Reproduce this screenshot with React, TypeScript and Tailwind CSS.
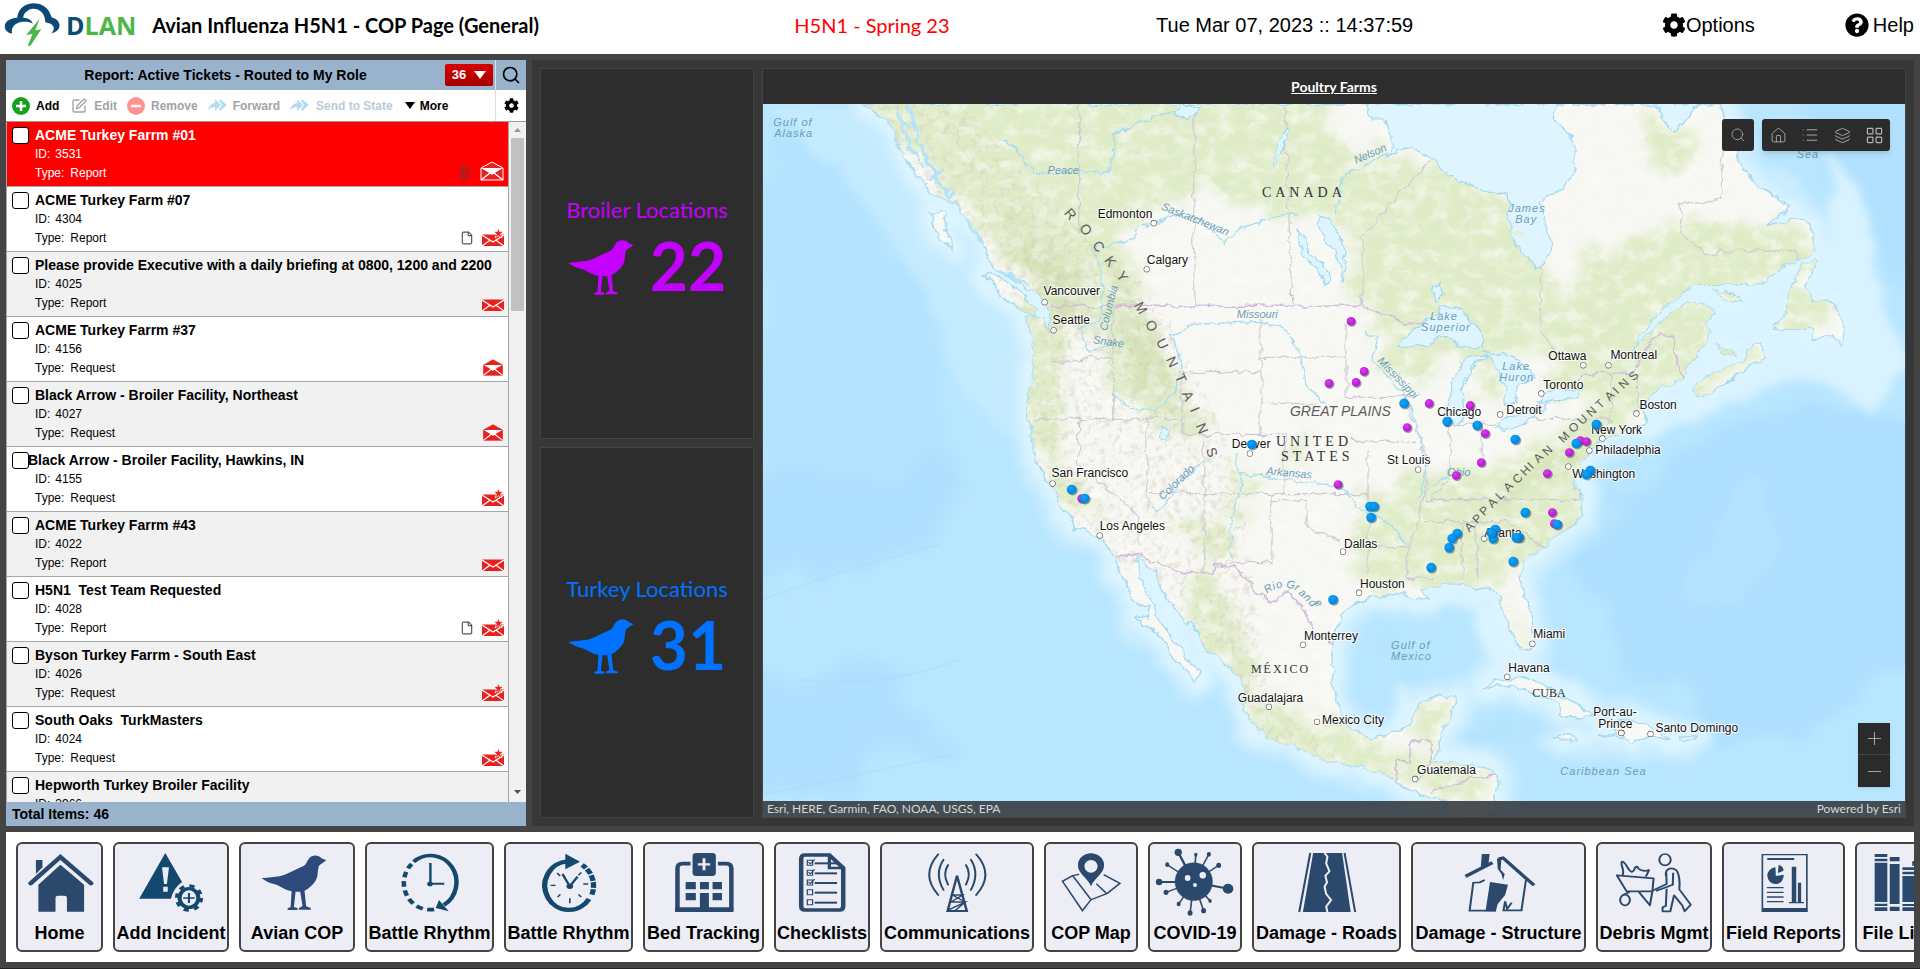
import React from 'react';
import { FaCog, FaQuestionCircle } from 'react-icons/fa';
import { File, Home, Layers, LayoutGrid, List, Minus, Paperclip, Plus, Search, SquarePen } from 'lucide-react';

type Mail = 'open' | 'closed' | 'new';

interface Ticket {
  title: string;
  id: string;
  type: string;
  mail: Mail;
  extra?: 'clip' | 'file';
}

const tickets: Ticket[] = [
  { title: 'ACME Turkey Farrm #01', id: '3531', type: 'Report', mail: 'open', extra: 'clip' },
  { title: 'ACME Turkey Farm #07', id: '4304', type: 'Report', mail: 'new', extra: 'file' },
  { title: 'Please provide Executive with a daily briefing at 0800, 1200 and 2200', id: '4025', type: 'Report', mail: 'closed' },
  { title: 'ACME Turkey Farrm #37', id: '4156', type: 'Request', mail: 'open' },
  { title: 'Black Arrow - Broiler Facility, Northeast', id: '4027', type: 'Request', mail: 'open' },
  { title: 'Black Arrow - Broiler Facility, Hawkins, IN', id: '4155', type: 'Request', mail: 'new' },
  { title: 'ACME Turkey Farrm #43', id: '4022', type: 'Report', mail: 'closed' },
  { title: 'H5N1  Test Team Requested', id: '4028', type: 'Report', mail: 'new', extra: 'file' },
  { title: 'Byson Turkey Farrm - South East', id: '4026', type: 'Request', mail: 'new' },
  { title: 'South Oaks  TurkMasters', id: '4024', type: 'Request', mail: 'new' },
  { title: 'Hepworth Turkey Broiler Facility', id: '3966', type: 'Request', mail: 'new' },
];

const BIRD =
  'M303 199 L288 193 C280 183 260 181 250 194 C243 204 242 212 232 217 L195 234 C180 242 165 247 150 248 L107 253 L126 264 C140 270 150 270 160 276 C175 284 183 289 195 291 L198 292 L195 339 L186 343 V348 H216 V342 L205 339 L210 293 H224 L231 336 L220 342 V347 H256 V342 L242 337 L237 290 C255 280 272 265 276 245 C278 230 279 214 283 213 Z';

const Bird = ({ className }: { className: string }) => (
  <svg viewBox="107 184 197 165" className={className} fill="currentColor" aria-hidden="true">
    <path d={BIRD} />
  </svg>
);

const Logo = () => (
  <svg viewBox="10 10 142 134" preserveAspectRatio="none" className="h-[45px] w-[57px]" aria-hidden="true">
    <path
      d="M30 104 C4 98 4 60 43 57 C46 4 108 0 124 42 C126 48 128 52 129 56 C153 62 157 96 128 103 C140 88 134 74 113 70 C113 34 84 22 69 36 C61 42 58 48 58 57 C70 58 79 64 82 74 C66 64 25 66 30 104 Z"
      fill="#0b4a75"
    />
    <path d="M99 60 L65 108 L81 105 L69 141 L76 140 L103 91 L88 94 Z" fill="#4cb748" />
  </svg>
);

const MailIcon = ({ kind, selected }: { kind: Mail; selected?: boolean }) => {
  if (kind === 'open') {
    return (
      <svg viewBox="0 0 24 20" className={selected ? 'h-5 w-6' : 'h-[17px] w-[22px]'} aria-hidden="true">
        <path d="M1 7 L12 1 L23 7 V19 H1 Z" fill="#e8211f" stroke={selected ? '#fff' : '#e8211f'} strokeWidth="1" />
        <path d="M1 7 H23 L13 13 H11 Z" fill="#fff" />
        <path d="M1 19 L10 12 L12 13 L14 12 L23 19" fill="none" stroke="#fff" strokeWidth="1.3" />
      </svg>
    );
  }
  return (
    <svg viewBox="0 0 22 17" className="h-[17px] w-[22px]" aria-hidden="true">
      <path d="M0 5.5 H22 V17 H0 Z" fill="#e8211f" />
      <path d="M0 6 L11 13 L22 6 M0 17 L8 11.3 M22 17 L14 11.3" fill="none" stroke="#fff" strokeWidth="1.2" />
      {kind === 'new' && (
        <path d="M16.5 -1 L17.7 2.5 H21.5 L18.5 5 L20 9 L16.5 6.7 L13 9 L14.5 5 L11.5 2.5 H15.3 Z" fill="#e8211f" stroke="#fff" strokeWidth=".7" />
      )}
    </svg>
  );
};

const ArrowIcon = () => (
  <svg viewBox="0 0 20 13" className="h-[13px] w-5" fill="#b5dcf0" aria-hidden="true">
    <path d="M0 11 Q1 5 7 4 V0 L13 6 L7 12 V8 Q3 8 0 11Z" />
    <path d="M12 0 L19 6 L12 12 L11 10 L14 6 L11 2Z" />
  </svg>
);

const TicketRow = ({ ticket, index }: { ticket: Ticket; index: number }) => {
  const selected = index === 0;
  const bg = selected ? 'bg-[#ff0000] text-white' : index % 2 ? 'bg-white' : 'bg-[#f1f1f1]';
  return (
    <li className={`flex h-[65px] shrink-0 border-b border-r border-[#a6a6a6] pl-[5px] ${bg}`}>
      <input
        id={`ticket-${ticket.id}`}
        type="checkbox"
        className="mt-[5px] h-[17px] w-[17px] shrink-0 appearance-none rounded-[3px] border border-black bg-white"
      />
      <div className={`flex min-w-0 flex-1 flex-col ${index === 5 ? '-ml-px' : 'pl-[6px]'}`}>
        <label htmlFor={`ticket-${ticket.id}`} className="mt-[3px] h-5 whitespace-pre text-[14px] leading-5 font-bold">
          {ticket.title}
        </label>
        <p className={`h-[18px] text-[12px] leading-[18px] ${index === 5 ? 'pl-[7px]' : ''}`}>
          <span className="mr-[5px]">ID:</span>
          {ticket.id}
        </p>
        <p className={`h-5 text-[12px] leading-5 ${index === 5 ? 'pl-[7px]' : ''}`}>
          <span className="mr-[6px]">Type:</span>
          {ticket.type}
        </p>
      </div>
      <div className="flex items-end gap-2 pb-[5px] pr-1">
        {ticket.extra === 'clip' && <Paperclip size={16} strokeWidth={1.8} className="-rotate-45 text-[#7a3030]" />}
        {ticket.extra === 'file' && <File size={14} strokeWidth={2} className="mb-px text-[#555]" />}
        <MailIcon kind={ticket.mail} selected={selected} />
      </div>
    </li>
  );
};

const TicketPanel = () => (
  <section className="flex w-[520px] shrink-0 flex-col bg-white">
    <div className="flex h-[30px] shrink-0 items-center bg-[#9ab3cc]">
      <h2 className="flex-1 text-center text-[14px] font-bold">Report: Active Tickets - Routed to My Role</h2>
      <button className="mr-[2px] flex h-[22px] w-12 items-center justify-center gap-2 rounded-[2px] bg-linear-to-b from-[#d80000] to-[#a30000] text-[13px] font-bold text-white">
        36
        <svg viewBox="0 0 12 8" className="h-2 w-3" fill="currentColor"><path d="M0 0H12L6 8Z" /></svg>
      </button>
      <button aria-label="Search tickets" className="flex h-full w-[31px] items-center justify-center border-l border-[#dbe4ed]">
        <Search size={20} strokeWidth={2} />
      </button>
    </div>
    <div className="flex h-8 shrink-0 items-center border-b border-[#999] text-[12px] font-bold">
      <div className="flex flex-1 items-center pl-[6px] text-[#a3a3a3]">
        <button className="flex items-center gap-[6px] text-black">
          <svg viewBox="0 0 18 18" className="h-[18px] w-[18px]"><circle cx="9" cy="9" r="9" fill="#13a31b" /><path d="M9 4V14M4 9H14" stroke="#fff" strokeWidth="2.5" /></svg>
          Add
        </button>
        <button className="ml-3 flex items-center gap-[7px]">
          <SquarePen size={16} strokeWidth={2} />
          Edit
        </button>
        <button className="ml-[10px] flex items-center gap-[6px]">
          <svg viewBox="0 0 18 18" className="h-[18px] w-[18px]"><circle cx="9" cy="9" r="9" fill="#ff9393" /><path d="M4 9H14" stroke="#fff" strokeWidth="2.5" /></svg>
          Remove
        </button>
        <button className="ml-[10px] flex items-center gap-[5px]">
          <ArrowIcon />
          Forward
        </button>
        <button className="ml-[10px] flex items-center gap-[6px] text-[#bccbd8]">
          <ArrowIcon />
          Send to State
        </button>
        <button className="ml-3 flex items-center gap-[5px] text-black">
          <svg viewBox="0 0 10 7" className="h-[7px] w-[10px]" fill="currentColor"><path d="M0 0H10L5 7Z" /></svg>
          More
        </button>
      </div>
      <button aria-label="Panel settings" className="flex h-full w-[31px] items-center justify-center border-l border-[#ddd]">
        <FaCog size={15} />
      </button>
    </div>
    <div className="flex min-h-0 flex-1 overflow-hidden">
      <ul className="flex min-w-0 flex-1 flex-col border-l border-[#a6a6a6]">
        {tickets.map((ticket, i) => (
          <TicketRow key={ticket.id} ticket={ticket} index={i} />
        ))}
      </ul>
      <div className="flex w-[17px] shrink-0 flex-col items-center justify-between bg-[#f1f1f1] pb-2" aria-hidden="true">
        <div className="flex w-full flex-col items-center">
          <svg viewBox="0 0 7 4" className="my-[6px] h-1 w-[7px]" fill="#999"><path d="M0 4H7L3.5 0Z" /></svg>
          <div className="h-[173px] w-[13px] bg-[#c1c1c1]" />
        </div>
        <svg viewBox="0 0 7 4" className="h-1 w-[7px]" fill="#505050"><path d="M0 0H7L3.5 4Z" /></svg>
      </div>
    </div>
    <div className="h-6 shrink-0 bg-[#9ab3cc] pl-[6px] text-[14px] leading-6 font-bold">Total Items: 46</div>
  </section>
);

const CountCard = ({ title, count, color }: { title: string; count: number; color: string }) => (
  <section className={`flex flex-1 flex-col items-center justify-center border border-[#444] bg-[#2d2d2d] pb-2 ${color}`}>
    <h3 className="text-[22px] leading-7">{title}</h3>
    <div className="mt-1 flex items-center gap-4">
      <Bird className="mt-1 h-[55px] w-[66px]" />
      <span className="text-[66px] leading-[76px] font-bold">{count}</span>
    </div>
  </section>
);

const MAINLAND =
  'M865 105 L888 120 897 140 908 163 923 180 932 197 956 203 967 220 982 243 993 267 1012 278 1026 288 1043 300 1052 313 1049 333 1045 320 1027 318 1032 340 1035 360 1032 383 1028 407 1032 433 1036 460 1045 477 1056 492 1062 507 1073 520 1075 529 1089 532 1100 538 1113 555 1124 580 1132 600 1147 607 1148 618 1137 620 1152 630 1167 643 1173 657 1189 672 1197 680 1200 672 1186 660 1174 640 1160 620 1150 600 1143 583 1136 563 1139 557 1152 570 1160 583 1167 600 1185 620 1202 635 1204 647 1219 657 1234 673 1245 687 1243 710 1256 727 1271 738 1297 748 1340 764 1362 767 1384 773 1403 787 1421 795 1444 800 1450 817 1494 817 1494 800 1498 777 1492 772 1470 765 1444 763 1431 763 1440 747 1440 733 1449 720 1457 698 1436 697 1418 705 1412 723 1396 733 1370 737 1347 727 1340 713 1333 687 1332 657 1333 640 1340 615 1358 603 1381 595 1405 595 1414 600 1429 598 1421 590 1432 587 1444 585 1462 583 1475 590 1488 588 1501 600 1506 620 1514 640 1525 652 1532 648 1533 627 1527 603 1519 577 1525 560 1543 548 1560 533 1582 517 1580 497 1573 480 1584 460 1599 441 1634 428 1647 423 1640 407 1651 393 1680 380 1690 360 1706 347 1710 333 1703 323 1714 317 1710 307 1688 303 1666 317 1647 337 1628 354 1636 343 1658 313 1680 297 1691 285 1747 285 1765 282 1776 270 1795 262 1814 253 1810 225 1800 218 1765 228 1789 207 1758 187 1741 170 1736 150 1725 127 1721 105 Z';
const ISLANDS = [
  'M985 275 L1000 277 1019 290 1037 310 1034 317 1015 307 997 290 Z',
  'M930 213 L945 213 945 230 954 250 941 240 Z',
  'M1693 387 L1725 367 1743 363 1751 347 1758 343 1764 357 1740 373 1710 393 1697 397 Z',
  'M1802 263 L1814 263 1806 287 1810 300 1832 303 1836 317 1843 327 1841 345 1832 337 1810 340 1814 330 1773 330 1784 313 1791 287 Z',
  'M1712 291 L1730 294 1742 303 1728 302 Z',
  'M1716 345 L1724 352 1732 352 1734 356 1722 355 Z',
  'M1482 690 L1495 681 1525 677 1551 690 1577 705 1595 717 1562 717 1558 703 1529 692 1505 684 Z',
  'M1599 735 L1617 735 1614 722 1636 721 1662 733 1668 738 1640 737 1632 743 1624 738 Z',
  'M1555 736 L1568 735 1577 740 1564 741 Z',
  'M1680 736 L1697 736 1696 740 1682 740 Z',
].join(' ');
const INLAND_WATER = [
  'M1366 105 L1370 120 1386 120 1394 153 1410 150 1429 158 1451 177 1477 190 1508 195 1510 233 1521 253 1536 267 1547 263 1551 243 1543 217 1540 202 1562 190 1575 170 1573 140 1553 120 1556 105 Z',
  'M1654 105 L1662 120 1675 133 1691 113 1700 105 Z',
  'M1397 347 L1414 330 1440 313 1442 307 1462 310 1469 323 1481 330 1484 347 1462 347 1440 337 1429 347 Z',
  'M1432 287 L1440 284 1443 296 1436 302 Z',
  'M1466 357 L1451 383 1445 413 1455 427 1464 417 1462 393 1471 367 1488 357 Z',
  'M1484 353 L1514 357 1536 377 1529 383 1518 383 1514 403 1506 403 1505 387 1499 377 1495 363 Z',
  'M1495 428 L1503 422 1525 413 1543 405 1545 410 1525 423 1506 430 Z',
  'M1538 402 L1547 393 1577 390 1577 397 1558 401 Z',
  'M1317 217 L1330 220 1340 238 1347 262 1343 282 1337 255 1325 242 Z',
  'M1296 230 L1306 240 1308 255 1326 268 1330 280 1325 286 1319 272 1302 256 Z',
  'M1282 134 L1288 130 1285 150 1272 168 1277 148 Z',
  'M1180 104 L1200 108 1190 120 1176 117 Z',
  'M1160 427 L1170 432 1168 440 1160 436 Z',
].join(' ');
const BORDERS =
  'M1079 105V232 M1194 105V307 M1285 105L1292 307 M1432 158L1362 237V300 M1540 267V333L1553 352 M1113 307V420 M1034 420H1182 M1182 373V435 M1182 373H1261 M1261 320V435 M1182 435H1285 M1261 358H1346 M1261 405H1320 M1079 420V465L1140 517V545 M1147 420V507 M1147 494H1368 M1204 435V572 M1284 435V494 M1272 494V563H1231 M1272 501H1307V528L1340 540 M1346 398H1410 M1350 442H1415 M1346 320V398 M1368 450V575 M1368 549H1408 M1425 500H1580 M1425 522H1505L1545 548 M1462 522V580 M1475 522L1478 580 M1407 405L1420 440 1427 475 1418 520 1408 550 1406 578H1432 M1449 424H1529 M1482 424V466 M1449 424V480L1430 500 M1528 420H1610L1600 440 M1611 374V425 M1637 376V410 M1050 362L1070 363 1090 358 1112 357 M1725 105L1720 200 1680 205 1682 235 1712 258 1720 252H1796L1798 262';
const NATION_BORDERS =
  'M1052 307H1362V300L1368 310 1388 317 1405 324 1427 323 M1540 410L1546 402 1592 373H1632L1645 350 1658 335 1672 337 1676 360 1682 378 M1113 556L1140 555 1182 573H1214V566H1234L1253 590 1272 603 1290 592 1305 612 1315 633 1335 645 M1397 762H1410V742H1431V763 M1397 762V785 M1431 763L1416 782 M1430 792L1470 778 1496 776';
const RIVERS =
  'M1003 142L1015 148 1035 175 1058 175 1079 170 1102 177 1112 165 1114 135 1150 120 1180 112 M1184 112L1210 105 M1095 250L1135 240 1137 228 1154 224 1180 216 1200 220 1225 245 1240 230 1272 218 1300 215 M1095 250L1104 285 1100 322 1080 330 1090 352 1110 345 M1113 397L1130 408 1155 411 1175 395 1182 365 1172 338 1195 325 1260 322 1285 330 1300 350 1305 385 1325 405 M1365 333L1378 338 1372 360 1395 385 1410 405 1418 430 1428 465 1418 500 M1240 474L1310 484 1340 485 1360 510 1390 525 1408 545 M1204 460L1180 485 1158 512 1150 505 M1236 455L1242 485 1230 530 1232 560 M1450 475L1425 490 M1394 153L1345 175 1335 215';

const cities: [string, number, number, number, number][] = [
  ['Edmonton', 1098, 219, 1154, 224],
  ['Calgary', 1147, 265, 1147, 270],
  ['Vancouver', 1044, 296, 1045, 303],
  ['Seattle', 1053, 325, 1054, 331],
  ['San Francisco', 1052, 477, 1053, 484],
  ['Los Angeles', 1100, 530, 1100, 536],
  ['Ottawa', 1548, 361, 1583, 366],
  ['Montreal', 1610, 360, 1608, 366],
  ['Toronto', 1543, 390, 1541, 394],
  ['Boston', 1639, 410, 1636, 414],
  ['Detroit', 1506, 415, 1500, 415],
  ['Chicago', 1437, 417, 1447, 424],
  ['New York', 1591, 435, 1602, 439],
  ['Philadelphia', 1595, 455, 1589, 451],
  ['Washington', 1572, 478, 1568, 467],
  ['St Louis', 1387, 465, 1418, 470],
  ['Denver', 1232, 449, 1250, 454],
  ['Dallas', 1344, 548, 1343, 552],
  ['Houston', 1360, 588, 1359, 593],
  ['Atlanta', 1484, 537, 1484, 539],
  ['Miami', 1533, 638, 1532, 644],
  ['Havana', 1508, 672, 1507, 677],
  ['Monterrey', 1304, 640, 1303, 645],
  ['Guadalajara', 1238, 702, 1269, 707],
  ['Mexico City', 1322, 724, 1317, 722],
  ['Guatemala', 1417, 774, 1415, 779],
  ['Port-au-', 1593, 716, 1621, 733],
  ['Prince', 1598, 728, 1621, 733],
  ['Santo Domingo', 1655, 732, 1650, 734],
];

const broilers = [
  [1351, 322], [1364, 372], [1356, 383], [1329, 384], [1429, 404], [1470, 406], [1407, 428], [1485, 434], [1580, 441], [1586, 442],
  [1569, 453], [1481, 463], [1456, 476], [1547, 474], [1552, 513], [1554, 524], [1338, 485], [1082, 499],
];
const turkeys = [
  [1252, 445], [1404, 404], [1447, 422], [1477, 426], [1515, 440], [1596, 425], [1576, 444], [1072, 490], [1085, 499], [1333, 600],
  [1370, 507], [1374, 507], [1371, 518], [1525, 513], [1557, 525], [1457, 534], [1452, 539], [1449, 548], [1495, 530], [1493, 539],
  [1491, 533], [1519, 538], [1516, 538], [1513, 562], [1431, 568], [1590, 471], [1586, 475],
];

const PoultryMap = () => (
  <svg viewBox="763 105 1142 712" preserveAspectRatio="xMidYMid slice" className="absolute inset-0 h-full w-full" role="img" aria-label="Poultry Farms">
    <defs>
      <filter id="coast" x="-5%" y="-5%" width="110%" height="110%">
        <feTurbulence type="fractalNoise" baseFrequency="0.09" numOctaves="3" seed="4" result="n" />
        <feDisplacementMap in="SourceGraphic" in2="n" scale="9" xChannelSelector="R" yChannelSelector="G" />
      </filter>
      <filter id="deep" x="-10%" y="-10%" width="120%" height="120%">
        <feTurbulence type="fractalNoise" baseFrequency="0.012" numOctaves="4" seed="5" result="n" />
        <feDisplacementMap in="SourceGraphic" in2="n" scale="90" xChannelSelector="R" yChannelSelector="G" />
        <feGaussianBlur stdDeviation="7" />
      </filter>
      <filter id="shelf" x="-10%" y="-10%" width="120%" height="120%">
        <feTurbulence type="fractalNoise" baseFrequency="0.03" numOctaves="3" seed="2" result="n" />
        <feDisplacementMap in="SourceGraphic" in2="n" scale="24" xChannelSelector="R" yChannelSelector="G" />
        <feGaussianBlur stdDeviation="4" />
      </filter>
      <filter id="green" x="-10%" y="-10%" width="120%" height="120%">
        <feTurbulence type="fractalNoise" baseFrequency="0.04" numOctaves="4" seed="8" result="n" />
        <feDisplacementMap in="SourceGraphic" in2="n" scale="50" xChannelSelector="R" yChannelSelector="G" />
        <feGaussianBlur stdDeviation="5" />
      </filter>
      <filter id="speckle" x="0" y="0" width="100%" height="100%">
        <feTurbulence type="fractalNoise" baseFrequency="0.06 0.08" numOctaves="5" seed="3" />
        <feColorMatrix values="0 0 0 0 .97  0 0 0 0 .97  0 0 0 0 .95  0 2.6 0 0 -1.1" />
      </filter>
      <filter id="relief" x="0" y="0" width="100%" height="100%">
        <feTurbulence type="fractalNoise" baseFrequency="0.16" numOctaves="4" seed="11" />
        <feColorMatrix values="0 0 0 0 .62  0 0 0 0 .56  0 0 0 0 .46  0 0 3.5 0 -1.75" />
      </filter>
      <clipPath id="land"><path d={MAINLAND + ISLANDS} /></clipPath>
      <clipPath id="mountains">
        <path d="M870 105H960L1060 210 1160 300 1240 470 1250 560 1270 700 1340 760 1400 790 1300 760 1240 720 1180 610 1090 540 1030 460 1030 330 960 230Z" />
      </clipPath>
      <radialGradient id="broiler" cx=".4" cy=".35"><stop offset="0" stopColor="#dc3df0" /><stop offset="1" stopColor="#b81fd2" /></radialGradient>
      <radialGradient id="turkey" cx=".4" cy=".35"><stop offset="0" stopColor="#14a3f7" /><stop offset="1" stopColor="#008be6" /></radialGradient>
    </defs>

    <rect x="763" y="105" width="1142" height="712" fill="#b9e6ff" />
    <g filter="url(#deep)">
      <path d="M763 130L800 120 850 180 920 270 960 380 940 430 960 520 900 560 763 590Z" fill="#b4e3ff" />
      <path d="M740 660L900 680 960 740 740 800Z M740 480L930 470 960 540 740 600Z" fill="#b0e0ff" />
      <path d="M1595 520L1700 450 1800 390 1930 440V650L1860 700 1720 740 1690 700 1600 640 1570 560Z" fill="#aedfff" />
      <path d="M1690 530L1760 480 1790 540 1740 600 1700 590Z" fill="#b6e4ff" />
      <path d="M1800 80H1930V290L1870 250 1830 190Z" fill="#b1e1ff" />
    </g>
    <g filter="url(#shelf)">
      <path d="M763 105H890L930 190 1000 270 1030 340 1010 440 970 400 920 280 840 170Z" fill="#c4eaff" />
      <path d={MAINLAND + ISLANDS} fill="none" stroke="#cbedff" strokeWidth="40" strokeLinejoin="round" />
      <path d="M1640 440L1660 330 1760 290 1830 240 1830 150 1870 220 1880 300 1905 370 1870 420 1820 380 1740 400Z" fill="#d8f2ff" />
      <path d="M1370 605L1440 590 1500 610 1530 660 1600 700 1500 670 1470 610Z M1450 690L1400 740 1395 690Z" fill="#daf3ff" />
      <path d={MAINLAND + ISLANDS} fill="none" stroke="#dcf4ff" strokeWidth="20" strokeLinejoin="round" />
    </g>
    <path d="M763 600Q840 570 940 545 M763 795Q860 775 950 755 M800 680Q880 690 960 660" fill="none" stroke="#a5d9f8" strokeWidth="2" opacity=".4" />
    <path d="M1380 640Q1420 660 1410 700 M1460 740Q1540 720 1590 725" fill="none" stroke="#acdcf8" strokeWidth="10" opacity=".35" filter="url(#shelf)" />

    <g filter="url(#coast)">
      <path d={MAINLAND + ISLANDS} fill="#f7f7f3" stroke="#a2d9ef" strokeWidth="1.5" />
      <g clipPath="url(#land)">
        <g filter="url(#green)" fill="#dfecc7">
          <path d="M860 90H1310L1370 180 1290 225 1200 190 1140 215 1120 250 1150 310 1190 400 1215 450 1160 430 1110 380 1090 300 1060 350 1060 460 1100 510 1070 520 1020 400 1030 290Z" />
          <path d="M1310 200L1385 150 1440 165 1520 200 1560 300 1590 250 1700 220 1790 230 1830 270 1700 300 1720 330 1640 410 1550 390 1540 350 1480 360 1400 350 1350 300 1350 230Z" />
          <path d="M1400 470L1470 470 1560 430 1620 390 1640 420 1580 470 1590 530 1500 580 1420 590 1390 540Z" />
          <path d="M1380 340L1430 350 1430 380 1380 380Z M1470 370L1500 370 1500 410 1470 400Z" />
          <path d="M1200 560L1225 590 1240 650 1280 710 1400 750 1490 770 1490 810 1380 780 1260 745 1225 670 1190 610Z" />
          <path d="M1410 700L1450 700 1440 750 1410 740Z M1290 450L1300 440 1310 480Z" />
          <path d="M1180 510L1240 540 1220 560 1160 530Z M1230 470L1250 470 1245 520 1230 510Z M1360 490L1430 510 1410 590 1350 570Z M1640 110L1700 150 1680 180 1650 160Z" />
          <path d="M1600 370L1700 320 1760 350 1690 400 1640 400Z M1780 290L1830 300 1820 335 1780 330Z M1500 590L1530 650 1515 640Z" />
        </g>
        <g filter="url(#green)" fill="#cedbac" opacity=".55">
          <path d="M1010 210L1080 270 1090 330 1060 330Z M1110 250L1150 320 1180 410 1130 380Z M1220 580L1250 660 1235 640Z M1480 520L1570 440 1590 420 1570 470Z" />
        </g>
        <rect x="763" y="105" width="1142" height="712" filter="url(#speckle)" opacity=".6" />
        <g clipPath="url(#mountains)"><rect x="763" y="105" width="640" height="712" filter="url(#relief)" opacity=".4" /></g>
        <path d={BORDERS} fill="none" stroke="#cfcbd4" strokeWidth="1.2" />
        <path d={NATION_BORDERS} fill="none" stroke="#d2bedb" strokeWidth="1.6" />
        <path d={RIVERS} fill="none" stroke="#a6dcf2" strokeWidth="1.3" />
      </g>
      <path d={INLAND_WATER} fill="#def5ff" stroke="#a2d9ef" strokeWidth="1.2" />
      <path d="M1511 232L1522 233 1526 238 1516 238Z" fill="#e6efd6" />
      <path d="M897 110L912 150 925 170 M908 105L920 145 940 185 M925 155L950 200 955 190 M967 220L985 245 M1000 270L1030 285 M905 125L912 130 M930 180L945 170" fill="none" stroke="#b6e4f6" strokeWidth="3" />
    </g>

    <g fontSize="11" fontStyle="italic" fill="#6b9db8" style={{ fontFamily: '"Liberation Sans", sans-serif' }}>
      <text x="774" y="127" letterSpacing="1">Gulf of</text>
      <text x="775" y="138" letterSpacing="1">Alaska</text>
      <text x="1048" y="175">Peace</text>
      <text x="1161" y="210" transform="rotate(22 1161 210)">Saskatchewan</text>
      <text x="1356" y="165" transform="rotate(-24 1356 165)">Nelson</text>
      <text x="1508" y="213" letterSpacing="1">James</text>
      <text x="1515" y="224" letterSpacing="1">Bay</text>
      <text x="1796" y="159" letterSpacing="1">Sea</text>
      <text x="1237" y="319">Missouri</text>
      <text x="1107" y="332" transform="rotate(-76 1107 332)">Columbia</text>
      <text x="1093" y="344" transform="rotate(8 1093 344)">Snake</text>
      <text x="1430" y="321" letterSpacing="1">Lake</text>
      <text x="1421" y="332" letterSpacing="1">Superior</text>
      <text x="1502" y="371" letterSpacing="1">Lake</text>
      <text x="1499" y="382" letterSpacing="1">Huron</text>
      <text x="1377" y="362" transform="rotate(46 1377 362)">Mississippi</text>
      <text x="1266" y="475" transform="rotate(5 1266 475)">Arkansas</text>
      <text x="1163" y="501" transform="rotate(-44 1163 501)">Colorado</text>
      <text x="1447" y="476">Ohio</text>
      <text x="1267 1274 1277 1283 1286 1294 1298 1303 1308" y="594 590 589 588 588 590 594 598 603" rotate="-35 -25 -15 0 8 25 38 45 52">Rio Grande</text>
      <text x="1391" y="649" letterSpacing="1">Gulf of</text>
      <text x="1391" y="660" letterSpacing="1">Mexico</text>
      <text x="1560" y="775" letterSpacing="1">Caribbean Sea</text>
    </g>
    <g fontSize="14" fill="#5c5c5c" style={{ fontFamily: '"Liberation Sans", sans-serif' }}>
      <text x="1290" y="417" fontStyle="italic">GREAT PLAINS</text>
      <text
        x="1064 1079 1092 1104 1116 1125 1134 1145 1156 1166 1175 1182 1190 1196 1206"
        y="214 229 246 261 276 290 306 324 342 360 377 394 410 426 450"
        rotate="50 52 54 55 56 58 60 62 64 65 66 66 68 68 70"
      >
        ROCKY MOUNTAINS
      </text>
      <text
        fontSize="12"
        x="1469 1477 1484 1492 1500 1508 1517 1525 1532 1538 1547 1556 1563 1573 1582 1591 1600 1609 1617 1623 1633"
        y="533 525 517 509 501 493 485 477 470 464 457 450 444 434 426 418 410 402 395 390 382"
        rotate="-45"
      >
        APPALACHIAN MOUNTAINS
      </text>
    </g>
    <g fontSize="14" fill="#333" style={{ fontFamily: '"Liberation Serif", serif' }}>
      <text x="1262" y="198" letterSpacing="4">CANADA</text>
      <text x="1276" y="447" letterSpacing="4">UNITED</text>
      <text x="1281" y="462" letterSpacing="4">STATES</text>
      <text x="1251" y="673" fontSize="12" letterSpacing="2">MÉXICO</text>
      <text x="1532" y="697" fontSize="12">CUBA</text>
    </g>
    <g fontSize="12" fill="#111" stroke="#fff" strokeWidth="2" strokeOpacity=".8" paintOrder="stroke" style={{ fontFamily: '"Liberation Sans", sans-serif' }}>
      {cities.map(([name, x, y, cx, cy]) => (
        <g key={name}>
          <circle cx={cx} cy={cy} r="2.5" fill="#fff" stroke="#555" strokeWidth="1.2" strokeOpacity="1" />
          <text x={x} y={y}>{name}</text>
        </g>
      ))}
    </g>
    {broilers.map(([x, y]) => (
      <g key={`${x}-${y}`}>
        <circle cx={x + 1} cy={y + 1} r="4.5" fill="#444" opacity=".5" />
        <circle cx={x} cy={y} r="4.3" fill="url(#broiler)" />
      </g>
    ))}
    {turkeys.map(([x, y]) => (
      <g key={`${x}-${y}`}>
        <circle cx={x + 1} cy={y + 1} r="5" fill="#444" opacity=".5" />
        <circle cx={x} cy={y} r="4.8" fill="url(#turkey)" />
      </g>
    ))}
  </svg>
);

const MapPanel = () => (
  <section className="flex min-w-0 flex-1 flex-col border border-[#444] bg-[#2d2d2d]">
    <h2 className="flex h-[35px] shrink-0 items-center justify-center text-[14px] font-bold text-white underline">Poultry Farms</h2>
    <div className="relative flex min-h-0 flex-1 flex-col justify-end overflow-hidden">
      <PoultryMap />
      <div className="absolute top-[15px] right-[15px] flex gap-2 text-[#b5b5b5]">
        <button aria-label="Search map" className="flex h-8 w-8 items-center justify-center rounded-[3px] bg-[#2b2b2b]"><Search size={16} strokeWidth={1.2} /></button>
        <div className="flex rounded-[3px] bg-[#2b2b2b] shadow-md">
          <button aria-label="Default view" className="flex h-8 w-8 items-center justify-center"><Home size={17} strokeWidth={1.2} /></button>
          <button aria-label="Legend" className="flex h-8 w-8 items-center justify-center"><List size={18} strokeWidth={1.2} /></button>
          <button aria-label="Layers" className="flex h-8 w-8 items-center justify-center"><Layers size={17} strokeWidth={1.2} /></button>
          <button aria-label="Basemaps" className="flex h-8 w-8 items-center justify-center"><LayoutGrid size={19} strokeWidth={1.5} /></button>
        </div>
      </div>
      <div className="absolute right-[15px] bottom-[30px] flex flex-col bg-[#2b2b2b] text-[#b5b5b5] shadow">
        <button aria-label="Zoom in" className="flex h-8 w-8 items-center justify-center border-b border-[#444]"><Plus size={21} strokeWidth={1} /></button>
        <button aria-label="Zoom out" className="flex h-8 w-8 items-center justify-center"><Minus size={21} strokeWidth={1} /></button>
      </div>
      <div className="relative flex h-4 shrink-0 items-center justify-between bg-[#363c40]/90 px-1 text-[12px] text-[#d8d8d8]">
        <span>Esri, HERE, Garmin, FAO, NOAA, USGS, EPA</span>
        <span>Powered by Esri</span>
      </div>
    </div>
  </section>
);

const NAVY = '#2b486d';
const TEAL = '#13496f';
const PALE = '#edeef5';

const spikes = [
  [1319, 85, 10], [1362, 92, 5], [1394, 91, 6], [1292, 122, 6], [1418, 124, 7], [1272, 174, 9], [1441, 194, 14],
  [1289, 205, 7], [1320, 240, 6], [1348, 267, 7], [1381, 260, 7], [1397, 231, 5],
];

interface Tile {
  label: string;
  width: string;
  cx: number;
  art: React.ReactNode;
}

const tiles: Tile[] = [
  {
    label: 'Home', width: 'w-[87px]', cx: 145,
    art: (
      <g fill={NAVY}>
        <path d="M86 108H102V130L86 150Z" />
        <path d="M73 178L146 99L221 178" fill="none" stroke={NAVY} strokeWidth="12" strokeLinecap="round" />
        <path d="M92 182L146 122L204 182V263H162V222Q162 215 155 215H141Q134 215 134 222V263H92Z" />
      </g>
    ),
  },
  {
    label: 'Add Incident', width: 'w-[116px]', cx: 419,
    art: (
      <g fill={TEAL}>
        <path d="M405 87L341 224H419Q425 192 446 174Z" />
        <path d="M397 130H414L409 180H402ZM400 188H411V203H400Z" fill={PALE} />
        <ellipse cx="463" cy="222" rx="23" ry="28" fill="none" stroke={TEAL} strokeWidth="10" />
        <ellipse cx="463" cy="222" rx="30" ry="37" fill="none" stroke={TEAL} strokeWidth="9" strokeDasharray="13 13.4" />
        <path d="M463 207V237M449 222H477" stroke={TEAL} strokeWidth="5" />
      </g>
    ),
  },
  { label: 'Avian COP', width: 'w-[116px]', cx: 727, art: <path d={BIRD} fill="#2d4a7c" transform="translate(553.2 -90) scale(.811 1)" /> },
  {
    label: 'Battle Rhythm', width: 'w-[129px]', cx: 1052,
    art: (
      <g fill="none" stroke={TEAL} strokeWidth="11">
        <path d="M1012 113A64 80 0 1 1 1086 243" />
        <path d="M1062 256A64 80 0 0 1 1007 120" strokeDasharray="17 11" />
        <path d="M1066 252L1074 228L1098 262Z" fill={TEAL} stroke="none" />
        <path d="M1053 117V179H1087" strokeWidth="6" />
        <circle cx="1052" cy="180" r="7" fill={TEAL} stroke="none" />
      </g>
    ),
  },
  {
    label: 'Battle Rhythm', width: 'w-[129px]', cx: 1394,
    art: (
      <g fill="none" stroke={TEAL} strokeWidth="13">
        <path d="M1390 112A59 73 0 1 0 1443 225" />
        <path d="M1450 212A59 73 0 0 0 1426 123" strokeDasharray="17 4" />
        <path d="M1385 89L1421 113L1385 136Z" fill={TEAL} stroke="none" />
        <path d="M1378 150L1396 187L1415 158" strokeWidth="6" />
        <circle cx="1396" cy="187" r="8" fill={TEAL} stroke="none" />
        <path d="M1349 184H1361M1429 180H1441M1396 223V238M1365 147L1372 156M1424 145L1417 154M1366 219L1373 211M1424 219L1417 211" strokeWidth="4" />
      </g>
    ),
  },
  {
    label: 'Bed Tracking', width: 'w-[121px]', cx: 155,
    art: (
      <g fill={NAVY}>
        <path d="M90 260V133Q90 119 102 119H122M189 119H210Q222 119 222 133V260" fill="none" stroke={NAVY} strokeWidth="11" />
        <path d="M84 250H227V264H84Z" />
        <rect x="127" y="87" width="57" height="69" rx="9" />
        <path d="M155 103V139M140 121H170" stroke={PALE} strokeWidth="7" />
        <path d="M110 174H135V196H110ZM145 174H167V196H145ZM176 174H199V196H176ZM110 207H135V229H110ZM176 207H199V229H176ZM145 207H167V255H145Z" />
      </g>
    ),
  },
  {
    label: 'Checklists', width: 'w-[96px]', cx: 446,
    art: (
      <g fill="none" stroke={NAVY} strokeWidth="11">
        <path d="M404 93H464L498 132V246Q498 258 489 258H404Q395 258 395 246V105Q395 93 404 93Z" />
        <path d="M464 93V132H498" strokeWidth="8" />
        {[118, 148, 177, 206, 236].map((y, i) => (
          <g key={y}>
            <path d={`M428 ${y}H483`} strokeWidth="6" />
            <path d={`M410 ${y - 9}H423V${y + 6}H410Z`} strokeWidth="3" />
            {i < 3 && <path d={`M413 ${y - 4}L417 ${y + 2}L428 ${y - 12}`} strokeWidth="3" />}
          </g>
        ))}
      </g>
    ),
  },
  {
    label: 'Communications', width: 'w-[154px]', cx: 778,
    art: (
      <g fill="none" stroke={NAVY} strokeWidth="5" strokeLinecap="round">
        <path d="M778 155L755 261H802Z" strokeWidth="6" />
        <path d="M767 213H792L763 234H798L760 256M767 213L798 234L775 258" strokeWidth="4" />
        <path d="M756 123Q742 150 756 182M745 107Q722 150 745 198M732 91Q688 152 732 213M800 123Q814 150 800 182M812 107Q834 150 812 198M825 91Q870 152 825 213" />
      </g>
    ),
  },
  {
    label: 'COP Map', width: 'w-[94px]', cx: 1105,
    art: (
      <g fill="none" stroke={NAVY} strokeWidth="4">
        <path d="M1076 151L1060 155L1035 172L1084 260L1105 227L1145 208L1176 178L1136 152M1060 155L1105 227M1118 179L1142 207" />
        <path d="M1105 187C1096 160 1073 150 1073 124A32 36 0 0 1 1137 124C1137 150 1114 160 1105 187Z" fill={NAVY} stroke="none" />
        <ellipse cx="1105" cy="127" rx="16" ry="19" fill={PALE} stroke="none" />
      </g>
    ),
  },
  {
    label: 'COVID-19', width: 'w-[94px]', cx: 1360,
    art: (
      <g fill={NAVY} stroke={NAVY}>
        {spikes.map(([x, y, r]) => (
          <g key={x}>
            <path d={`M1357 174L${x} ${y}`} strokeWidth={r > 8 ? 6 : 4} />
            <ellipse cx={x} cy={y} rx={r - 1} ry={r + 1} stroke="none" />
          </g>
        ))}
        <ellipse cx="1357" cy="173" rx="46" ry="57" />
        <g fill={PALE} stroke="none"><ellipse cx="1342" cy="162" rx="7" ry="9" /><ellipse cx="1379" cy="154" rx="8" ry="10" /><ellipse cx="1360" cy="183" rx="5" ry="6" /></g>
      </g>
    ),
  },
  {
    label: 'Damage - Roads', width: 'w-[149px]', cx: 114,
    art: (
      <g fill={NAVY}>
        <path d="M80 87H151L172 264H55Z" />
        <path d="M73 87L46 264M157 87L183 264" stroke={NAVY} strokeWidth="5" />
        <path d="M108 87L115 98 112 118 120 142 110 155 114 175 108 188 112 210 124 228 112 248 115 264" fill="none" stroke={PALE} strokeWidth="5" />
      </g>
    ),
  },
  {
    label: 'Damage - Structure', width: 'w-[175px]', cx: 535,
    art: (
      <g fill={NAVY}>
        <path d="M453 157L519 116" stroke={NAVY} strokeWidth="10" />
        <path d="M493 90H512L509 122L490 134Z" />
        <path d="M534 105L545 102L621 184" fill="none" stroke={NAVY} strokeWidth="9" />
        <path d="M530 104L541 101L539 137L549 150L545 168L541 150L532 135Z" />
        <path d="M500 168L488 175L472 176L463 260H528" fill="none" stroke={NAVY} strokeWidth="5" />
        <path d="M513 174L557 182L550 213L532 240L527 262H502Z" />
        <path d="M601 168L590 259H546L550 232L555 255L566 236" fill="none" stroke={NAVY} strokeWidth="5" />
      </g>
    ),
  },
  {
    label: 'Debris Mgmt', width: 'w-[116px]', cx: 915,
    art: (
      <g fill="none" stroke={NAVY} strokeWidth="5" strokeLinejoin="round">
        <ellipse cx="942" cy="107" rx="14" ry="17" />
        <path d="M824 154L914 163L911 202H848Z" />
        <path d="M838 153C844 138 832 124 836 113C848 113 848 138 861 144C872 140 862 130 874 128C876 138 890 144 903 138L895 158" />
        <ellipse cx="844" cy="228" rx="12" ry="16" />
        <path d="M855 204L838 214M878 204L905 244L911 202M911 200L946 180L945 146M962 146L961 182L920 201" />
        <path d="M944 155C942 136 956 126 970 139C977 150 979 178 977 196L1005 242L990 262L984 244L964 214L955 262H936V250L944 246L946 194" />
      </g>
    ),
  },
  {
    label: 'Field Reports', width: 'w-[123px]', cx: 1231,
    art: (
      <g fill={NAVY}>
        <path d="M1178 92H1287V262H1178Z" fill="none" stroke={NAVY} strokeWidth="4" />
        <path d="M1177 252H1288V264H1177ZM1190 102H1256V108H1190ZM1250 128H1261V236H1250ZM1265 176H1273V236H1265ZM1243 234H1280V238H1243Z" />
        <path d="M1210 130A20 25 0 1 0 1230 152L1211 156Z" />
        <path d="M1218 122A18 20 0 0 1 1230 140L1216 147Z" />
        <path d="M1189 191H1230M1189 205H1230M1189 219H1230M1189 233H1230" stroke={NAVY} strokeWidth="4" />
      </g>
    ),
  },
  {
    label: 'File Library', width: 'w-[112px]', cx: 1545,
    art: (
      <g fill={NAVY}>
        <path d="M1456 90H1487V99H1456ZM1456 104H1487V112H1456ZM1456 116H1487V234H1456ZM1456 239H1487V246H1456ZM1456 250H1487V261H1456Z" />
        <path d="M1493 99H1517V112H1493ZM1493 120H1517V240H1493ZM1493 248H1517V261H1493Z" />
        <path d="M1524 130H1560V138H1524ZM1524 143H1560V151H1524ZM1524 156H1560V234H1524ZM1524 240H1560V246H1524ZM1524 250H1560V261H1524ZM1548 112L1580 105V125H1548Z" />
      </g>
    ),
  },
];

const Launcher = () => (
  <nav className="mx-[6px] mt-[6px] flex h-[130px] shrink-0 gap-[10px] overflow-hidden bg-white px-[10px] pt-[10px]">
    {tiles.map((tile, i) => (
      <button
        key={i}
        className={`flex h-[110px] shrink-0 flex-col items-center rounded-[6px] border-2 border-[#444] bg-[#edeef5] pt-[2px] ${tile.width}`}
      >
        <svg viewBox={`${tile.cx - 98} 66 196 216`} preserveAspectRatio="none" className="h-[72px] w-[80px] shrink-0" aria-hidden="true">
          {tile.art}
        </svg>
        <span className="mt-[3px] text-[18px] leading-6 font-bold whitespace-nowrap">{tile.label}</span>
      </button>
    ))}
  </nav>
);

export default function App() {
  return (
    <div className="flex h-screen flex-col overflow-hidden border-b border-[#222] bg-[#444] pb-[6px] font-['Liberation_Sans',Arial,sans-serif] text-black">
      <header className="flex h-[54px] shrink-0 items-center bg-white pr-[6px] pb-[5px] text-[20px] whitespace-nowrap">
        <div className="flex w-[41.5%] items-center pl-1">
          <Logo />
          <span className="ml-[5px] font-['Open_Sans',sans-serif] text-[25px] leading-8 font-bold text-[#0b4a75]">
            D<span className="text-[#4cb748]">LAN</span>
          </span>
          <h1 className="ml-4 font-['Lato',sans-serif] text-[20px] font-bold">Avian Influenza H5N1 - COP Page (General)</h1>
        </div>
        <span className="w-[18.9%] font-['Lato',sans-serif] text-[#ff0000]">H5N1 - Spring 23</span>
        <time className="flex-1">Tue Mar 07, 2023 :: 14:37:59</time>
        <button className="mr-[90px] flex items-center">
          <FaCog size={24} />
          Options
        </button>
        <button className="flex items-center gap-1">
          <FaQuestionCircle size={24} />
          Help
        </button>
      </header>
      <main className="flex min-h-0 flex-1 gap-[6px] px-[6px] pt-[6px]">
        <TicketPanel />
        <div className="flex min-w-0 flex-1 gap-2 bg-[#373737] p-2 font-['Lato',sans-serif]">
          <div className="flex w-[214px] shrink-0 flex-col gap-2">
            <CountCard title="Broiler Locations" count={22} color="text-[#c400ff]" />
            <CountCard title="Turkey Locations" count={31} color="text-[#0072ff]" />
          </div>
          <MapPanel />
        </div>
      </main>
      <Launcher />
    </div>
  );
}
